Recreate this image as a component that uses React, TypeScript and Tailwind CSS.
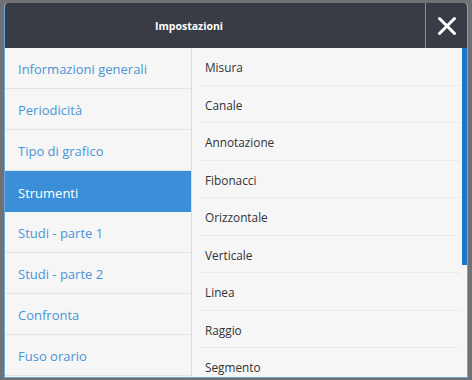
import { X } from "lucide-react";

const leftItems = [
  "Informazioni generali",
  "Periodicità",
  "Tipo di grafico",
  "Strumenti",
  "Studi - parte 1",
  "Studi - parte 2",
  "Confronta",
  "Fuso orario",
];

const rightItems = [
  "Misura",
  "Canale",
  "Annotazione",
  "Fibonacci",
  "Orizzontale",
  "Verticale",
  "Linea",
  "Raggio",
  "Segmento",
];

export default function App() {
  return (
    <div
      className="w-[472px] h-[380px] bg-[#707173] pt-[3px] pl-[4px] overflow-hidden"
      style={{ fontFamily: '"Open Sans", "Liberation Sans", sans-serif' }}
    >
      {/* finestra impostazioni */}
      <div className="w-[464px] h-[375px] flex flex-col border border-[#6ea7dd] border-t-0 rounded-t-[4px] overflow-hidden bg-[#f6f6f6]">
        <div className="h-[45px] flex bg-[#393c45] shrink-0">
          <div className="flex-1 flex items-center justify-center text-white text-[10.5px] font-bold pr-[52px] pt-[2px]">
            Impostazioni
          </div>
          <div className="w-[42px] border-l border-[#8d9096] flex items-center justify-center">
            <X className="w-[30px] h-[30px] text-white" strokeWidth={2.4} />
          </div>
        </div>

        <div className="flex flex-1 min-h-0">
          {/* menu sezioni */}
          <div className="w-[187px] border-r border-[#dedede] bg-[#f6f6f6] flex flex-col shrink-0">
            {leftItems.map((item) => {
              const active = item === "Strumenti";
              return (
                <div
                  key={item}
                  className={
                    active
                      ? "h-[41px] shrink-0 flex items-center pl-[13px] pt-[4px] text-[13px] bg-[#3b8fd9] text-white"
                      : "h-[41px] shrink-0 flex items-center pl-[13px] pt-[4px] text-[13px] text-[#4a94d6] border-b border-[#e4e4e4]"
                  }
                >
                  {item}
                </div>
              );
            })}
          </div>

          {/* lista strumenti */}
          <div className="flex-1 flex min-w-0">
            <div className="flex-1 flex flex-col pl-[8px] pr-[2px]">
              {rightItems.map((item) => (
                <div
                  key={item}
                  className="h-[37.5px] shrink-0 flex items-center pl-[5px] pt-[4px] text-[11.8px] text-[#333333] border-b border-[#ebebeb]"
                >
                  {item}
                </div>
              ))}
            </div>
            <div className="w-[5px] flex flex-col shrink-0">
              <div className="h-[217px] bg-[#1a76cf]" />
            </div>
          </div>
        </div>
      </div>
    </div>
  );
}
